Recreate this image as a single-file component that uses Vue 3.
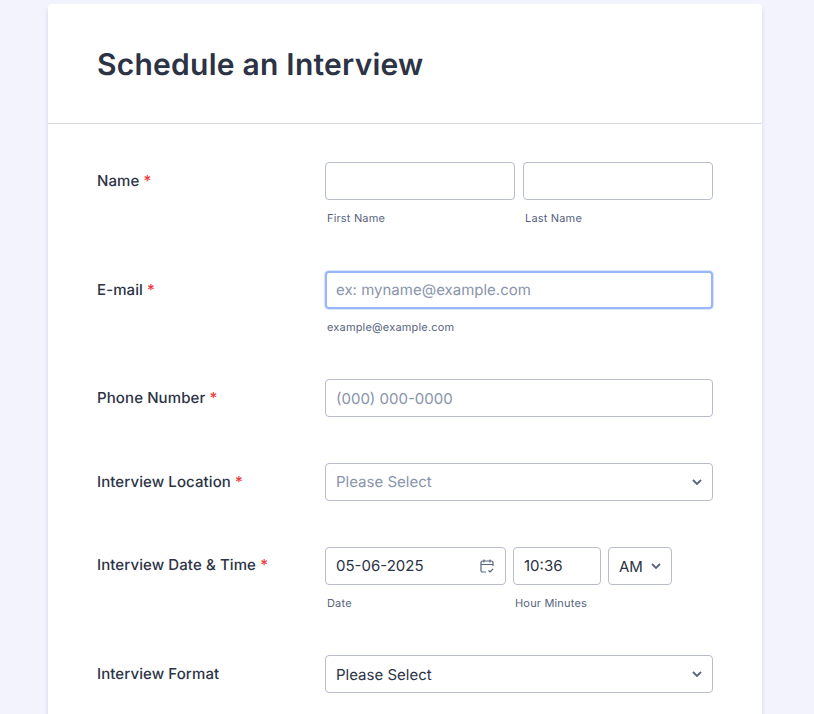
<script setup>
const chevron = 'M1 1l4 4 4-4'
</script>

<template>
  <div class="page">
    <form class="card" @submit.prevent>
      <header class="head">
        <h1>Schedule an Interview</h1>
      </header>
      <div class="body">
        <div class="row row-name">
          <label class="label">Name <span class="req">*</span></label>
          <div class="pair">
            <div class="field">
              <input class="input" type="text" />
              <span class="sub">First Name</span>
            </div>
            <div class="field">
              <input class="input" type="text" />
              <span class="sub">Last Name</span>
            </div>
          </div>
        </div>

        <div class="row row-email">
          <label class="label">E-mail <span class="req">*</span></label>
          <div class="field">
            <input class="input focused lift" type="text" placeholder="ex: myname@example.com" />
            <span class="sub">example@example.com</span>
          </div>
        </div>

        <div class="row row-plain">
          <label class="label">Phone Number <span class="req">*</span></label>
          <input class="input" type="text" placeholder="(000) 000-0000" />
        </div>

        <div class="row row-plain">
          <label class="label">Interview Location <span class="req">*</span></label>
          <div class="input select muted lift">
            Please Select
            <svg class="chev" width="10" height="6" viewBox="0 0 10 6"><path :d="chevron" /></svg>
          </div>
        </div>

        <div class="row row-date">
          <label class="label">Interview Date &amp; Time <span class="req">*</span></label>
          <div class="datetime">
            <div class="field date">
              <div class="input select lift">
                05-06-2025
                <svg class="cal" width="16" height="16" viewBox="0 0 16 16">
                  <path d="M7 14H3.600A1.600 1.600 0 0 1 2 12.400V4.600A1.600 1.600 0 0 1 3.600 3h8.800A1.600 1.600 0 0 1 14 4.600V8M2 6.500h12M5 1.500v3M11 1.500v3M9.500 12.500l1.500 1.500 3-3" />
                </svg>
              </div>
              <span class="sub">Date</span>
            </div>
            <div class="field time">
              <input class="input lift" type="text" value="10:36" />
              <span class="sub">Hour Minutes</span>
            </div>
            <div class="input select ampm">
              AM
              <svg class="chev" width="10" height="6" viewBox="0 0 10 6"><path :d="chevron" /></svg>
            </div>
          </div>
        </div>

        <div class="row row-plain">
          <label class="label">Interview Format</label>
          <div class="input select">
            Please Select
            <svg class="chev" width="10" height="6" viewBox="0 0 10 6"><path :d="chevron" /></svg>
          </div>
        </div>
      </div>
    </form>
  </div>
</template>

<style>
html,
body {
  margin: 0;
  background: #f3f3fe;
}
</style>

<style scoped>
.page {
  height: 714px;
  overflow: hidden;
  padding-top: 4px;
  box-sizing: border-box;
  font-family: Inter, "Liberation Sans", sans-serif;
  text-rendering: geometricPrecision;
}

.card {
  width: 714px;
  margin-left: 48px;
  background: #fff;
  border-radius: 4px 4px 0 0;
  box-shadow: 0 4px 4px rgba(87, 100, 126, 0.21);
}

.head {
  height: 120px;
  box-sizing: border-box;
  padding: 42px 49px 0;
  border-bottom: 1px solid #d8dae9;
}

h1 {
  margin: 0;
  font-size: 30px;
  line-height: 38px;
  font-weight: 600;
  letter-spacing: 0.24px;
  color: #2c3345;
}

.body {
  padding: 38px 49px 0;
}

.row {
  display: grid;
  grid-template-columns: 228px 388px;
  align-items: start;
}

.row-name {
  height: 109px;
}

.row-email {
  height: 108px;
}

.row-plain {
  height: 84px;
}

.row-date {
  height: 108px;
}

.label {
  font-size: 15px;
  line-height: 18px;
  font-weight: 500;
  letter-spacing: 0.1px;
  color: #2c3345;
  padding-top: 10px;
}

.row-date .label {
  padding-top: 9px;
}

.req {
  color: #f23a3c;
}

.pair {
  display: grid;
  grid-template-columns: 190px 190px;
  gap: 8px;
}

.field {
  display: flex;
  flex-direction: column;
  min-width: 0;
}

.input {
  width: 100%;
  height: 38px;
  box-sizing: border-box;
  padding: 0 10px;
  border: 1px solid #b8bdc9;
  border-radius: 4px;
  background: #fff;
  font: 400 15px Inter, "Liberation Sans", sans-serif;
  text-rendering: geometricPrecision;
  color: #2c3345;
  outline: none;
}

.input::placeholder {
  color: #8894ab;
}

.focused {
  border: 2px solid #98b6fb;
  padding: 0 9px;
  box-shadow: 0 0 0 1px #d9e3fd;
}

.lift {
  padding-bottom: 2px;
}

.select {
  position: relative;
  display: flex;
  align-items: center;
}

.muted {
  color: #8894ab;
}

.chev {
  position: absolute;
  right: 10px;
  top: 15px;
  fill: none;
  stroke: #57647e;
  stroke-width: 1.8;
}

.cal {
  position: absolute;
  right: 10px;
  top: 10px;
  fill: none;
  stroke: #57647e;
  stroke-width: 1.2;
}

.sub {
  margin: 11px 0 0 2px;
  font-size: 11px;
  line-height: 14px;
  letter-spacing: 0.18px;
  color: #57647e;
}

.datetime {
  display: flex;
  gap: 7px;
}

.date {
  width: 181px;
}

.time {
  width: 88px;
}

.ampm {
  width: 64px;
}
</style>
